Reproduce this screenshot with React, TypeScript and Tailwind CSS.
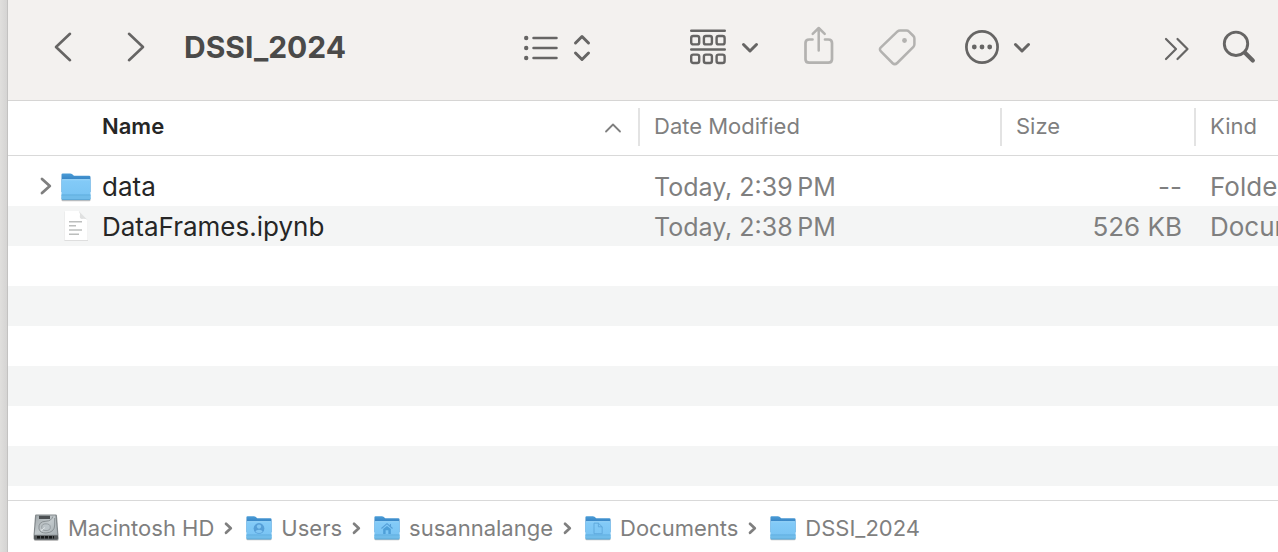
import React, { useId } from "react";

type Glyph = "user" | "home" | "doc";

function Folder({ className, glyph }: { className: string; glyph?: Glyph }) {
  const id = useId();
  return (
    <svg viewBox="0 0 32 30" className={className} aria-hidden="true">
      <defs>
        <linearGradient id={`${id}b`} x1="0" y1="0" x2="0" y2="1">
          <stop offset="0" stopColor="#4a9dd8" />
          <stop offset="0.3" stopColor="#3a87c6" />
          <stop offset="1" stopColor="#3a87c6" />
        </linearGradient>
        <linearGradient id={`${id}f`} x1="0" y1="0" x2="0" y2="1">
          <stop offset="0" stopColor="#84cbf8" />
          <stop offset="1" stopColor="#76c2f2" />
        </linearGradient>
      </defs>
      <rect x="1.5" y="25" width="29" height="4.2" rx="1.2" fill="#000" opacity="0.25" />
      <path d="M1.5 2.6Q1.5 1.4 2.8 1.4H10.2Q11.2 1.4 12 2.1L13.3 3.2Q14 3.8 15 3.8H29Q30.5 3.8 30.5 5.2V20H1.5Z" fill={`url(#${id}b)`} />
      <path d="M1.5 9Q1.5 7.3 3 7.3H29Q30.5 7.3 30.5 9V26.3Q30.5 28 29 28H3Q1.5 28 1.5 26.3Z" fill={`url(#${id}f)`} />
      <path d="M2 7.7H30" stroke="#a4dcfb" strokeWidth="0.8" />
      <path d="M1.5 23H30.5V26.5Q30.5 28 29 28H3Q1.5 28 1.5 26.5Z" fill="#70bcea" />
      <path d="M1.5 22.9H30.5" stroke="#5caadb" strokeWidth="0.8" />
      <path d="M2 27.6H30" stroke="#559fce" strokeWidth="0.7" />
      {glyph === "user" && (
        <g>
          <circle cx="16" cy="15.5" r="6.2" fill="#559fd8" />
          <circle cx="16" cy="13.4" r="2.5" fill="#80c6f3" />
          <path d="M11.8 19.3Q12.5 16.9 16 16.9T20.2 19.3Q18.6 20.8 16 20.8T11.8 19.3Z" fill="#80c6f3" />
        </g>
      )}
      {glyph === "home" && (
        <g fill="#4e9fd8">
          <path d="M11.6 16.2L16 12.6L20.4 16.2V21.8H17.6V17.5H14.4V21.8H11.6Z" />
          <path d="M9.6 15.6L16 10L22.4 15.6M20 10.5V13" fill="none" stroke="#559fd8" strokeWidth="1.3" />
        </g>
      )}
      {glyph === "doc" && (
        <path d="M11.4 9.4H16.4L20.8 13.6V21.6H11.4ZM16.4 9.4V13.6H20.8" fill="none" stroke="#5ba6da" strokeWidth="1" strokeLinejoin="round" />
      )}
    </svg>
  );
}

function DocumentIcon() {
  return (
    <svg viewBox="0 0 32 32" className="h-8 w-8" aria-hidden="true">
      <path d="M4.4 1.6H19L28 10.6V30.8H4.4Z" fill="#000" opacity="0.12" />
      <path d="M4.6 1H18.6L27.7 10V30H4.6Z" fill="#fff" />
      <path d="M18.8 1.2Q20.4 3 19.8 7Q19.8 8.8 21.6 8.9Q25.5 8.4 27.6 10Z" fill="#dfe0e0" />
      <path d="M9 11.7H22M9 15.8H16M9 20H22M9 24.2H19" stroke="#bcbebd" strokeWidth="1.6" />
    </svg>
  );
}

function DiskIcon() {
  return (
    <svg viewBox="0 0 28 30" className="h-[30px] w-7" aria-hidden="true">
      <defs>
        <linearGradient id="disk" x1="0" y1="0" x2="1" y2="1">
          <stop offset="0" stopColor="#a2a9ac" />
          <stop offset="0.5" stopColor="#c2c9cc" />
          <stop offset="1" stopColor="#a7afb3" />
        </linearGradient>
      </defs>
      <rect x="2" y="23" width="24.5" height="5" rx="1.5" fill="#000" opacity="0.25" />
      <path d="M4.2 1.5H23.6Q24.8 1.5 25 2.8L26.4 21.5V25.5Q26.4 27 25 27H3Q1.6 27 1.6 25.5V21.5L3 2.8Q3.1 1.5 4.2 1.5Z" fill="#83898c" />
      <path d="M4.4 2.6H23.4L25.3 21.8H2.6Z" fill="url(#disk)" />
      <path d="M2 22.4H26V25Q26 26.4 24.8 26.4H3.2Q2 26.4 2 25Z" fill="#55595b" />
      <path d="M5 24.3H22" stroke="#17191a" strokeWidth="2.6" strokeDasharray="3 1" />
      <rect x="7" y="2.8" width="11" height="3.2" fill="#4c5053" />
      <path d="M7 16Q6 8.4 14 8.2Q19.5 8 20.8 3.5M22.7 5V12Q22.5 19.5 14 20Q8 20 7 16" fill="none" stroke="#838a8d" strokeWidth="0.9" />
      <ellipse cx="14" cy="14.2" rx="4.3" ry="3.4" fill="#bcc4c8" stroke="#8b9397" strokeWidth="0.8" />
      <path d="M9 17.5L13 14.5" stroke="#e2e7e9" strokeWidth="1" />
    </svg>
  );
}

function Chevron({ d, className, box, stroke }: { d: string; className: string; box: string; stroke: number }) {
  return (
    <svg viewBox={box} className={className} fill="none" stroke="currentColor" strokeWidth={stroke} strokeLinecap="round" strokeLinejoin="round" aria-hidden="true">
      <path d={d} />
    </svg>
  );
}

function DownChevron() {
  return (
    <span className="pt-0.5">
      <Chevron box="0 0 18 12" className="h-3 w-[18px]" stroke={3} d="M2.5 2.5L9 9L15.5 2.5" />
    </span>
  );
}

function Toolbar() {
  return (
    <header className="flex h-[101px] shrink-0 items-center border-b border-[#d6d5d4] bg-[#f3f1ef] pb-1.5 pr-[22px] text-[#666564]">
      <nav aria-label="History" className="ml-11 flex gap-[50px]">
        <button type="button" aria-label="Back">
          <Chevron box="0 0 22 32" className="h-8 w-[22px]" stroke={2.6} d="M18 2.8L4 16L18 29.2" />
        </button>
        <button type="button" aria-label="Forward">
          <Chevron box="0 0 22 32" className="h-8 w-[22px]" stroke={2.6} d="M5 2.8L19 16L5 29.2" />
        </button>
      </nav>
      <h1 className="ml-[38px] text-[30px] font-bold leading-9 text-[#4a4a49]">DSSI_2024</h1>
      <div className="ml-auto flex items-center">
        <button type="button" aria-label="List view" className="mr-[98px] flex items-center gap-3.5 pt-0.5">
          <svg viewBox="0 0 36 28" className="h-7 w-9" fill="none" stroke="currentColor" strokeLinecap="round" aria-hidden="true">
            <path d="M10.5 4H33.5M10.5 14H33.5M10.5 24H33.5" strokeWidth="2.5" />
            <path d="M3.2 4H3.21M3.2 14H3.21M3.2 24H3.21" strokeWidth="4.4" />
          </svg>
          <Chevron box="0 0 18 28" className="h-7 w-[18px]" stroke={3} d="M2.5 9L9 2.5L15.5 9M2.5 19L9 25.5L15.5 19" />
        </button>
        <button type="button" aria-label="Group items" className="mr-[41px] flex items-center gap-3.5">
          <svg viewBox="0 0 38 38" className="h-[38px] w-[38px]" fill="none" stroke="currentColor" strokeWidth="2.4" strokeLinecap="round" aria-hidden="true">
            <path d="M2.2 2.8H35.8M2.2 21.5H35.8" />
            {[2.2, 14.9, 27.6].map((x) => (
              <g key={x}>
                <rect x={x} y="8" width="8" height="8.4" rx="2" />
                <rect x={x} y="26.6" width="8" height="8.4" rx="2" />
              </g>
            ))}
          </svg>
          <DownChevron />
        </button>
        <button type="button" aria-label="Share" className="mr-10 text-[#b3b2b0]">
          <svg viewBox="0 0 36 42" className="h-[42px] w-9" fill="none" stroke="currentColor" strokeWidth="2.7" strokeLinecap="round" strokeLinejoin="round" aria-hidden="true">
            <path d="M12.5 13.5H9.2Q5.5 13.5 5.5 17V33.2Q5.5 36.7 9.2 36.7H28.3Q32 36.7 32 33.2V17Q32 13.5 28.3 13.5H25" />
            <path d="M18.7 24.5V2.5M12.7 7.8L18.7 2L24.7 7.8" strokeWidth="2.5" />
          </svg>
        </button>
        <button type="button" aria-label="Tags" className="mr-[46px] text-[#b3b2b0]">
          <svg viewBox="0 0 42 42" className="h-[42px] w-[42px]" fill="none" stroke="currentColor" strokeWidth="2.5" strokeLinejoin="round" aria-hidden="true">
            <path d="M21.5 5.4Q22.5 4.6 24 4.6H30.5Q32 4.6 33 5.6L37.4 10Q38.4 11 38.4 12.5V18.3Q38.4 19.8 37.4 20.8L21.2 37Q18.8 39.3 16.4 37L4.9 25.4Q2.9 23.3 4.9 21.4Z" />
            <circle cx="28.5" cy="14.5" r="2.4" fill="currentColor" stroke="none" />
          </svg>
        </button>
        <button type="button" aria-label="More actions" className="mr-[131px] flex items-center gap-[13px]">
          <svg viewBox="0 0 36 36" className="h-9 w-9" fill="none" stroke="currentColor" aria-hidden="true">
            <circle cx="18" cy="18" r="15.6" strokeWidth="2.7" />
            <g fill="currentColor" stroke="none">
              <circle cx="10.3" cy="18" r="2.4" />
              <circle cx="18" cy="18" r="2.4" />
              <circle cx="25.7" cy="18" r="2.4" />
            </g>
          </svg>
          <DownChevron />
        </button>
        <button type="button" aria-label="Show more toolbar items" className="mr-[30px] pt-1">
          <Chevron box="0 0 28 26" className="h-[26px] w-7" stroke={2.2} d="M4 3L14 13L4 23M15.5 3L25.5 13L15.5 23" />
        </button>
        <button type="button" aria-label="Search">
          <svg viewBox="0 0 36 36" className="h-9 w-9" fill="none" stroke="currentColor" strokeLinecap="round" aria-hidden="true">
            <circle cx="16" cy="14.8" r="11.7" strokeWidth="2.9" />
            <path d="M25 23.7L32.8 31.5" strokeWidth="4.2" />
          </svg>
        </button>
      </div>
    </header>
  );
}

function HeadCell({ label, sorted, last }: { label: string; sorted?: boolean; last?: boolean }) {
  return (
    <th scope="col" aria-sort={sorted ? "ascending" : undefined} className="h-[55px] border-b border-[#d9d9d9] p-0 pb-0.5 text-left">
      <div
        className={
          (last ? "" : "border-r-2 border-[#e3e3e3] ") +
          (sorted ? "pl-[94px] pr-4 font-semibold text-[#262626] " : "pl-3.5 font-normal text-[#7f7f7f] ") +
          "flex h-[38px] items-center justify-between pb-[3px] text-[22px] leading-7"
        }
      >
        <button type="button">{label}</button>
        {sorted && (
          <span className="pt-1 text-[#7f7f7f]">
            <Chevron box="0 0 18 12" className="h-3 w-[18px]" stroke={1.8} d="M2 9.5L9 2.5L16 9.5" />
          </span>
        )}
      </div>
    </th>
  );
}

const files = [
  { name: "data", date: "Today, 2:39\u2009PM", size: "--", kind: "Folder", folder: true },
  { name: "DataFrames.ipynb", date: "Today, 2:38\u2009PM", size: "526 KB", kind: "Document", folder: false },
];

function FileTable() {
  return (
    <table className="w-full shrink-0 table-fixed border-separate border-spacing-0 text-[26px] leading-[38px]">
      <colgroup>
        <col />
        <col className="w-[362px]" />
        <col className="w-[194px]" />
        <col className="w-[82px]" />
      </colgroup>
      <thead>
        <tr>
          <HeadCell label="Name" sorted />
          <HeadCell label="Date Modified" />
          <HeadCell label="Size" />
          <HeadCell label="Kind" last />
        </tr>
      </thead>
      <tbody className="whitespace-nowrap text-[#7f7f7f] before:block before:h-2.5">
        {files.map((f) => (
          <tr key={f.name} className="even:bg-[#f4f5f5]">
            <td className="p-0">
              <div className="flex h-10 items-center pl-[30px] text-[#262626]">
                <span className="flex w-[22px] text-[#7f7f7f]">
                  {f.folder && (
                    <button type="button" aria-label="Expand data">
                      <Chevron box="0 0 14 20" className="h-5 w-3.5" stroke={2.8} d="M4 3L11.8 10L4 17" />
                    </button>
                  )}
                </span>
                {f.folder ? <Folder className="mt-0.5 h-[30px] w-8" /> : <DocumentIcon />}
                <span className="pl-2.5 pt-0.5">{f.name}</span>
              </div>
            </td>
            <td className="p-0 pl-3.5 pt-0.5 text-[25px]">{f.date}</td>
            <td className="p-0 pr-3.5 pt-0.5 text-right">{f.size}</td>
            <td className="p-0 pl-3.5 pt-0.5">{f.kind}</td>
          </tr>
        ))}
      </tbody>
    </table>
  );
}

const crumbs: { name: string; glyph?: Glyph }[] = [
  { name: "Macintosh HD" },
  { name: "Users", glyph: "user" },
  { name: "susannalange", glyph: "home" },
  { name: "Documents", glyph: "doc" },
  { name: "DSSI_2024" },
];

function PathBar() {
  return (
    <nav aria-label="Path" className="shrink-0 border-t border-[#d9d9d9] bg-white text-[22px] leading-7 text-[#7f7f7f]">
      <ol className="flex h-[51px] items-center pl-6 pt-0.5">
        {crumbs.map((c, i) => (
          <li key={c.name} className="flex items-center">
            {i > 0 && <Chevron box="0 0 12 16" className="ml-2 mr-[11px] h-4 w-3" stroke={2.7} d="M4 3.8L8.8 8.3L4 12.8" />}
            <a href="#" className="flex items-center gap-2">
              {i === 0 ? <DiskIcon /> : <Folder className="h-[26px] w-7" glyph={c.glyph} />}
              {c.name}
            </a>
          </li>
        ))}
      </ol>
    </nav>
  );
}

export default function App() {
  return (
    <div className="flex h-screen overflow-hidden bg-[#dedddb] font-['Inter',sans-serif]">
      <div className="w-2 shrink-0 border-r border-[#c3c2c1] bg-linear-to-r from-[#e0dfdd] to-[#d5d4d3]" />
      <main className="flex min-w-0 flex-1 flex-col bg-white">
        <Toolbar />
        <FileTable />
        <div className="min-h-0 flex-1 bg-[repeating-linear-gradient(to_bottom,#ffffff_0px,#ffffff_40px,#f4f5f5_40px,#f4f5f5_80px)]" />
        <PathBar />
      </main>
    </div>
  );
}
